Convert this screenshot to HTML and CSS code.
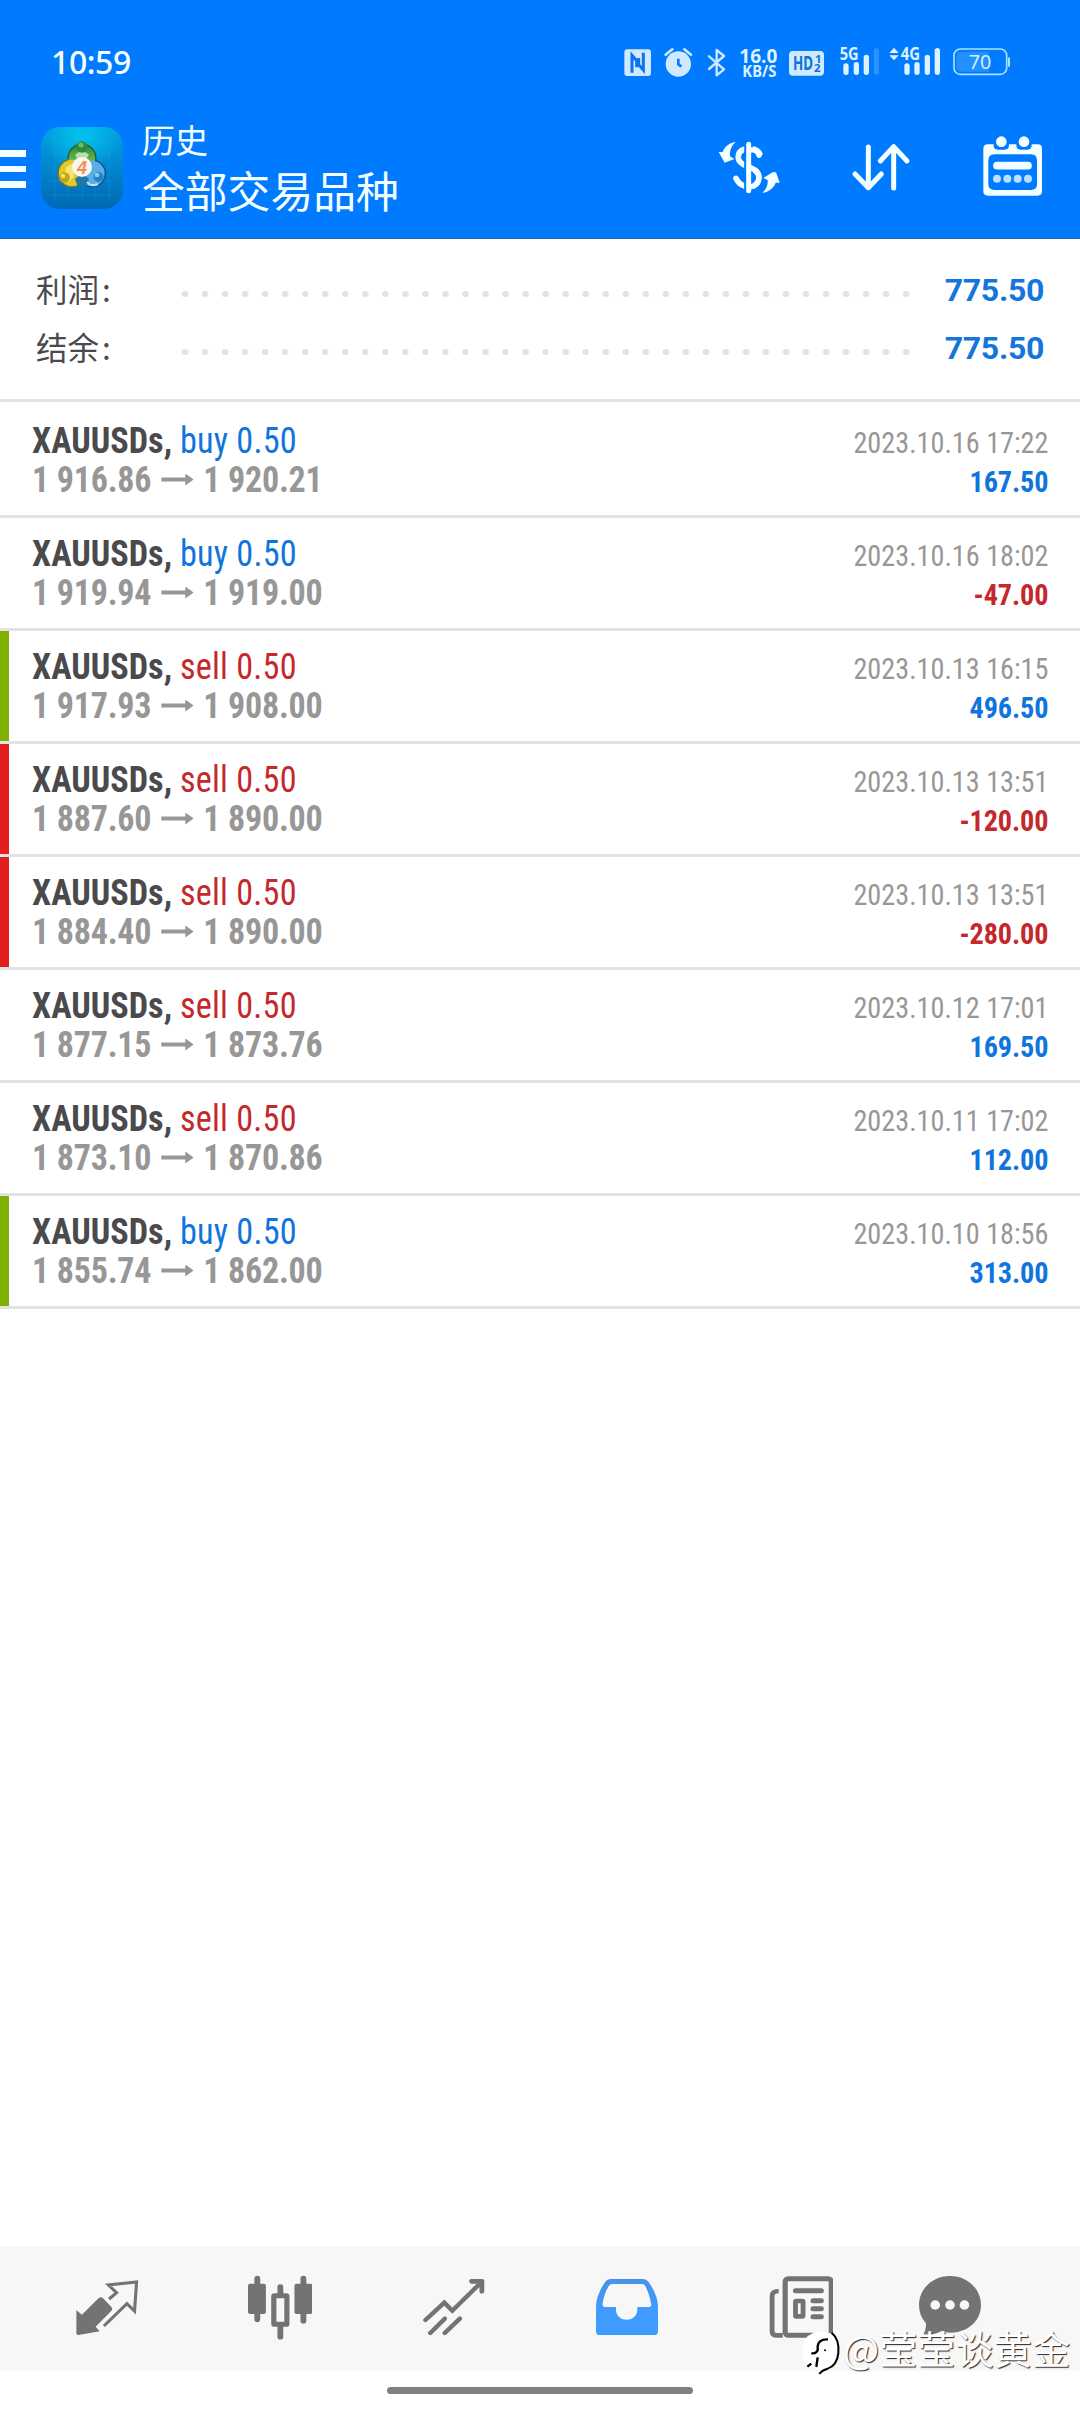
FILE: index.html
```html
<!DOCTYPE html>
<html lang="zh-CN">
<head>
<meta charset="utf-8">
<title>历史</title>
<link rel="stylesheet" href="styles.css">
</head>
<body>
<header class="header">
  <div class="status">
    <span class="clock">10:59</span>
    <div class="status-icons">
      <svg width="38" height="40" viewBox="60 36 114 120"><rect x="73" y="58" width="80" height="80" rx="9" fill="#cfeaff"/><path d="M96 128V76L110 92V112M130 68V120L116 104V84" fill="none" stroke="#0a74f5" stroke-width="9"/></svg>
      <svg width="41" height="40" viewBox="174 36 123 120"><circle cx="235" cy="102" r="38" fill="#cfeaff"/><path d="M197 74L217 58M273 74L253 58" stroke="#cfeaff" stroke-width="8" stroke-linecap="round"/><path d="M235 86V103L244 110" fill="none" stroke="#0a78fa" stroke-width="8"/></svg>
      <svg width="34" height="40" viewBox="297 36 102 120"><path d="M327 79L372 118L350 136V60L372 78L327 117" fill="none" stroke="#cfeaff" stroke-width="7" stroke-linejoin="round" stroke-linecap="round"/></svg>
      <svg class="status-text" width="50" height="40" viewBox="399 36 150 120"><text x="418" y="99" font-size="60" textLength="114" lengthAdjust="spacingAndGlyphs">16.0</text><text x="427" y="141" font-size="46" textLength="102" lengthAdjust="spacingAndGlyphs">KB/S</text></svg>
      <svg width="48" height="40" viewBox="549 36 144 120"><rect x="567" y="63" width="105" height="74" rx="12" fill="#cfeaff"/><g class="hd"><text x="579" y="121" font-size="57" textLength="60" lengthAdjust="spacingAndGlyphs">HD</text><text x="645" y="98" font-size="34">1</text><text x="642" y="126" font-size="34">2</text></g></svg>
      <svg class="status-text" width="54" height="40" viewBox="693 36 162 120"><text x="719" y="89" font-size="51" textLength="57" lengthAdjust="spacingAndGlyphs">5G</text><path d="M738 108V127M769 104V127M799 82V127" stroke="#dcf2ff" stroke-width="16" stroke-linecap="round"/><path d="M829 62V127" stroke="#2c92ff" stroke-width="15" stroke-linecap="round"/></svg>
      <svg class="status-text" width="62" height="40" viewBox="855 36 186 120"><path d="M868 69L882 53L896 69ZM868 76L882 91L896 76Z" fill="#dcf2ff"/><text x="902" y="89" font-size="51" textLength="58" lengthAdjust="spacingAndGlyphs">4G</text><path d="M921 108V127M951 104V127M982 82V127M1012 62V127" stroke="#dcf2ff" stroke-width="16" stroke-linecap="round"/></svg>
      <svg class="battery" width="68" height="40" viewBox="1041 36 204 120"><rect x="1062" y="57" width="158" height="76" rx="19" fill="none" stroke="#a9e4ff" stroke-width="5"/><path d="M1083 65H1166V125H1083Q1069 125 1069 111V79Q1069 65 1083 65Z" fill="#2490ff"/><path d="M1227 85V108" stroke="#a9e4ff" stroke-width="6" stroke-linecap="round"/><text x="1106" y="117" font-size="60" textLength="68" lengthAdjust="spacingAndGlyphs">70</text></svg>
    </div>
  </div>
  <div class="toolbar">
    <div class="menu"><i></i><i></i><i></i></div>
    <svg class="app-icon" width="82" height="82" viewBox="0 0 82 82">
      <defs>
        <linearGradient id="bg" x1="0" y1="0" x2="0" y2="1"><stop offset="0" stop-color="#00a4e4"/><stop offset=".5" stop-color="#0086cd"/><stop offset="1" stop-color="#0068b4"/></linearGradient>
        <radialGradient id="glow" cx=".5" cy=".12" r=".45"><stop offset="0" stop-color="#00c4ec"/><stop offset="1" stop-color="#00c4ec" stop-opacity="0"/></radialGradient>
        <linearGradient id="green" x1="0" y1="0" x2="0" y2="1"><stop offset="0" stop-color="#2c8c3c"/><stop offset="1" stop-color="#92cf5c"/></linearGradient>
      </defs>
      <rect width="82" height="82" rx="19" fill="url(#bg)"/>
      <rect width="82" height="82" rx="19" fill="url(#glow)"/>
      <path d="M14 8V74M27 8V74M41 8V74M54 8V74M68 8V74M8 14H74M8 27H74M8 41H74M8 54H74M8 68H74" stroke="#39b3e5" stroke-opacity=".22"/>
      <circle cx="41" cy="31" r="14.5" fill="#17603c"/>
      <circle cx="31" cy="46" r="14.500" fill="#78701b"/>
      <circle cx="51" cy="46.500" r="14" fill="#0b5088"/>
      <circle cx="41" cy="31" r="13.2" fill="url(#green)"/>
      <circle cx="31" cy="46" r="13.200" fill="#dfc92c"/>
      <circle cx="51" cy="46.500" r="12.700" fill="#59aee6"/>
      <path d="M34 28A9 9 0 0 1 48 28L41 38Z" fill="#b9dfa0"/>
      <path d="M24 44Q25 38 32 37L33 50Q29 54 26 56" fill="#f3e674"/>
      <path d="M34 52L41 46L48 52L45 60Q40 55 37 60Z" fill="#2277a8"/>
      <path d="M46 55Q50 60 57 57" fill="none" stroke="#bfe3f8" stroke-width="2"/>
      <circle cx="41" cy="20" r="5.7" fill="#2c8a43"/><circle cx="40" cy="18" r="2.5" fill="#72bb65"/>
      <circle cx="23.500" cy="50.500" r="5.300" fill="#c2a414"/><circle cx="22" cy="49" r="2.300" fill="#f2e26b"/>
      <circle cx="57.500" cy="50" r="5" fill="#2683c9"/><circle cx="56" cy="48" r="2.300" fill="#8bccf5"/>
      <circle cx="41" cy="40" r="10" fill="#f7f7f3"/>
      <text class="app-four" x="41" y="46.500" text-anchor="middle">4</text>
    </svg>
    <div class="titles">
      <div class="screen">历史</div>
      <div class="filter">全部交易品种</div>
    </div>
    <div class="actions">
      <svg width="62" height="62" viewBox="86 78 186 186"><path d="M211 131C202 115 180 111 162 119C143 127 141 151 160 162L195 181C214 191 213 217 194 227C173 237 149 225 140 205" fill="none" stroke="#f4ffff" stroke-width="17" stroke-linecap="round"/><path d="M178 88V256" stroke="#007aff" stroke-width="27"/><path d="M178 103V242" stroke="#f4ffff" stroke-width="15" stroke-linecap="round"/><path d="M184 173L199 181C212 191 213 217 194 227L185 230M184 120C197 118 205 122 209 136" fill="none" stroke="#f4ffff" stroke-width="16" stroke-linecap="round"/><path d="M139 96C122 98 107 108 100 126H88L106 158L135 147L122 139C121 120 126 108 139 96Z" fill="#f4ffff"/><path d="M219 249C236 246 252 236 259 218H271L260 187H250L222 204L235 210C236 227 230 238 219 249Z" fill="#f4ffff"/></svg>
      <svg width="62" height="62" viewBox="482 78 186 186"><path d="M537 111V233M497 192L537 233L576 192M613 234V110M573 153L613 110L653 153" fill="none" stroke="#f4ffff" stroke-width="15" stroke-linecap="round" stroke-linejoin="round"/></svg>
      <svg width="62" height="62" viewBox="875 79 186 186"><path fill-rule="evenodd" d="M893 104H1042Q1055 104 1055 117V245Q1055 258 1042 258H893Q879 258 879 245V117Q879 104 893 104ZM913 134Q894 134 894 153V224Q894 241 913 241H1022Q1040 241 1040 224V153Q1040 134 1022 134Z" fill="#f4ffff"/><path d="M910 96V107Q910 120 923 120H943Q956 120 956 107V96ZM978 96V107Q978 120 991 120H1011Q1024 120 1024 107V96Z" fill="#007aff"/><circle cx="933" cy="96" r="16" fill="#f4ffff"/><circle cx="1001" cy="96" r="16" fill="#f4ffff"/><path d="M920 168H1013" stroke="#f4ffff" stroke-width="23" stroke-linecap="round"/><g fill="#b9e2ff"><circle cx="920" cy="207" r="12"/><circle cx="951" cy="207" r="12"/><circle cx="982" cy="207" r="12"/><circle cx="1013" cy="207" r="12"/></g></svg>
    </div>
  </div>
</header>

<section class="summary">
  <div class="sum-row"><span>利润<b>:</b></span><i class="dots"></i><strong>775.50</strong></div>
  <div class="sum-row"><span>结余<b>:</b></span><i class="dots"></i><strong>775.50</strong></div>
</section>

<main class="deals">
  <article class="deal"><div class="left"><p class="name">XAUUSDs, <span class="buy">buy 0.50</span></p><p class="price">1 916.86<i class="arrow"></i>1 920.21</p></div><div class="right"><p class="date">2023.10.16 17:22</p><p class="profit buy">167.50</p></div></article>
  <article class="deal"><div class="left"><p class="name">XAUUSDs, <span class="buy">buy 0.50</span></p><p class="price">1 919.94<i class="arrow"></i>1 919.00</p></div><div class="right"><p class="date">2023.10.16 18:02</p><p class="profit sell">-47.00</p></div></article>
  <article class="deal tp"><div class="left"><p class="name">XAUUSDs, <span class="sell">sell 0.50</span></p><p class="price">1 917.93<i class="arrow"></i>1 908.00</p></div><div class="right"><p class="date">2023.10.13 16:15</p><p class="profit buy">496.50</p></div></article>
  <article class="deal sl"><div class="left"><p class="name">XAUUSDs, <span class="sell">sell 0.50</span></p><p class="price">1 887.60<i class="arrow"></i>1 890.00</p></div><div class="right"><p class="date">2023.10.13 13:51</p><p class="profit sell">-120.00</p></div></article>
  <article class="deal sl"><div class="left"><p class="name">XAUUSDs, <span class="sell">sell 0.50</span></p><p class="price">1 884.40<i class="arrow"></i>1 890.00</p></div><div class="right"><p class="date">2023.10.13 13:51</p><p class="profit sell">-280.00</p></div></article>
  <article class="deal"><div class="left"><p class="name">XAUUSDs, <span class="sell">sell 0.50</span></p><p class="price">1 877.15<i class="arrow"></i>1 873.76</p></div><div class="right"><p class="date">2023.10.12 17:01</p><p class="profit buy">169.50</p></div></article>
  <article class="deal"><div class="left"><p class="name">XAUUSDs, <span class="sell">sell 0.50</span></p><p class="price">1 873.10<i class="arrow"></i>1 870.86</p></div><div class="right"><p class="date">2023.10.11 17:02</p><p class="profit buy">112.00</p></div></article>
  <article class="deal tp"><div class="left"><p class="name">XAUUSDs, <span class="buy">buy 0.50</span></p><p class="price">1 855.74<i class="arrow"></i>1 862.00</p></div><div class="right"><p class="date">2023.10.10 18:56</p><p class="profit buy">313.00</p></div></article>
</main>

<nav class="tabs">
  <svg viewBox="220 135 186 198" preserveAspectRatio="none"><path d="M224 241L240 254L289 204Q295 199 301 204L326 231Q331 236 326 242L280 290L292 304L230 315Q224 316 224 309Z" fill="#737373"/><path d="M319 207L341 188L317 165L399 156L393 243L371 221L304 288" fill="none" stroke="#737373" stroke-width="9"/></svg>
  <svg viewBox="720 135 186 198" preserveAspectRatio="none"><path d="M747 146V268M881 146V272M814 171V195M814 285V320" stroke="#737373" stroke-width="17" stroke-linecap="round"/><rect x="720" y="161" width="52" height="91" rx="6" fill="#737373"/><rect x="855" y="161" width="52" height="91" rx="6" fill="#737373"/><rect x="795" y="197" width="38" height="86" rx="2" fill="#f7f7f7" stroke="#737373" stroke-width="15"/></svg>
  <svg viewBox="1223 135 186 198" preserveAspectRatio="none"><path d="M1233 270L1288 218L1311 242L1397 155M1247 309L1289 266M1289 309L1333 266" fill="none" stroke="#737373" stroke-width="13" stroke-linecap="round"/><path d="M1367 154H1397V184" fill="none" stroke="#737373" stroke-width="14" stroke-linecap="round" stroke-linejoin="round"/></svg>
  <svg viewBox="160 135 186 198" preserveAspectRatio="none"><defs><linearGradient id="tray" x1="0" y1="0" x2="0" y2="1"><stop offset="0" stop-color="#4a92e8"/><stop offset=".55" stop-color="#409bff"/></linearGradient></defs><path fill="url(#tray)" fill-rule="evenodd" d="M205 147H300Q310 147 315 155Q343 195 343 230V305Q343 315 332 315H174Q163 315 163 305V230Q163 195 190 155Q195 147 205 147ZM210 162Q204 162 200 168Q186 191 182 222Q181 231 189 231H221V240C223 279 281 279 283 240V231H317Q325 231 323 222Q318 191 306 168Q303 162 297 162Z"/></svg>
  <svg viewBox="664 135 186 198" preserveAspectRatio="none"><path d="M692 183Q673 184 673 198V304Q673 316 685 316H704" fill="none" stroke="#737373" stroke-width="14"/><rect x="711" y="146" width="134" height="170" rx="9" fill="#f7f7f7" stroke="#737373" stroke-width="15"/><path d="M741 182H816M792 212H816M792 236H816M792 260H816" stroke="#737373" stroke-width="15" stroke-linecap="round"/><rect x="741" y="213" width="22" height="46" rx="2" fill="#f7f7f7" stroke="#737373" stroke-width="14"/></svg>
  <svg viewBox="1095 135 186 198" preserveAspectRatio="none"><path d="M1188 138C1238 138 1278 176 1278 225C1278 273 1240 308 1188 308Q1176 308 1164 303Q1138 316 1110 316Q1120 296 1118 280Q1098 258 1098 225C1098 176 1138 138 1188 138Z" fill="#737373"/><g fill="#f7f7f7"><circle cx="1145" cy="225" r="14"/><circle cx="1188" cy="225" r="14"/><circle cx="1230" cy="225" r="14"/></g></svg>
</nav>
<div class="gesture"><i></i></div>
<div class="watermark">
  <svg width="42" height="48" viewBox="0 0 126 144"><path d="M38 8Q64 -2 88 10Q108 20 108 50Q108 92 93 108Q80 120 60 125L50 116Q12 112 5 72Q-2 24 38 8Z" fill="#fff"/><path d="M92 8Q116 28 112 70Q108 106 80 116Q62 121 55 132" fill="none" stroke="#000" stroke-width="6"/><path d="M81 28Q52 27 50 49V62M31 70Q49 72 51 56M50 82L46 111M31 101L19 110" fill="none" stroke="#000" stroke-width="7"/><circle cx="72" cy="61" r="3"/></svg>
  <span>@莹莹谈黄金</span>
</div>
</body>
</html>
```
FILE: styles.css
```css
* { box-sizing: border-box; }
body {
  margin: 0;
  width: 1080px;
  height: 2412px;
  display: flex;
  flex-direction: column;
  position: relative;
  overflow: hidden;
  background: #fff;
  font-family: Roboto, "Noto Sans CJK SC", sans-serif;
}
p { margin: 0; }
svg { display: block; flex: none; }

.header {
  height: 239px;
  background: #007aff;
  border-bottom: 1px solid #1767b4;
  color: #f4ffff;
}
.status {
  height: 124px;
  padding: 42px 65px 0 51px;
  display: flex;
  justify-content: space-between;
}
.clock {
  font: 500 32px/39px "Noto Sans", sans-serif;
  letter-spacing: -0.4px;
}
.status-icons { display: flex; }
.status-text text { font-family: "Noto Sans", sans-serif; font-weight: 700; fill: #dcf2ff; }
.hd text { font-family: "Noto Sans", sans-serif; font-weight: 700; fill: #0a74d8; }
.battery text { font-family: "Noto Sans", sans-serif; fill: #cdeeff; }

.toolbar { display: flex; align-items: flex-start; padding-right: 36px; }
.menu { width: 26px; padding-top: 26px; display: grid; gap: 9px; }
.menu i { height: 6.5px; background: #f4ffff; }
.app-icon { margin: 3px 0 0 15px; }
.app-four { font: italic 700 18px "Liberation Sans", sans-serif; fill: #f0924a; }
.titles { margin: -2px 0 0 19px; font-family: "Noto Sans CJK SC", sans-serif; }
.screen { font-size: 33px; line-height: 34px; }
.filter { font-size: 42.8px; line-height: 50px; margin-top: 8px; }
.actions { margin: 12px 0 0 auto; display: flex; gap: 70px; }

.summary {
  height: 163px;
  padding: 20px 36px 0;
  border-bottom: 3px solid #e3e3e3;
  font-size: 32px;
  color: #4a4a4d;
}
.sum-row { display: flex; height: 58px; align-items: center; line-height: 58px; }
.sum-row span { width: 139px; font-family: "Noto Sans CJK SC", sans-serif; font-size: 31.5px; }
.sum-row b { font-weight: 400; margin-left: 3px; }
.dots {
  width: 742px;
  height: 20px;
  margin-top: 11px;
  background: radial-gradient(circle, #e2e2e2 2.8px, transparent 3.6px) 0 0 / 20.04px 20px;
}
.sum-row strong { margin: 3px 0 0 auto; font-weight: 700; letter-spacing: -0.3px; color: #1476dc; }

.deals { flex: 1; padding-top: 3px; font-stretch: 75%; }
.deal {
  height: 113px;
  padding: 21px 32px 0;
  display: flex;
  justify-content: space-between;
  border-bottom: 3px solid #e3e3e3;
  background: no-repeat 0 0 / 9px 110px;
}
.tp { background-image: linear-gradient(#80b000, #80b000); }
.sl { background-image: linear-gradient(#e21e1e, #e21e1e); }
.left { transform-origin: 0 0; transform: scaleX(0.937); }
.name { font-size: 36.5px; line-height: 39px; margin-top: -5px; font-weight: 700; color: #4a4a4d; }
.name span { font-weight: 400; letter-spacing: 0.25px; }
.price { display: flex; align-items: center; font-size: 36.3px; line-height: 39px; font-weight: 700; letter-spacing: -0.2px; color: #979797; }
.arrow { width: 35px; height: 12px; margin: 0 10.2px; background: #979797; clip-path: polygon(0 4px, 26px 4px, 26px 0, 35px 6px, 26px 12px, 26px 8px, 0 8px); }
.right { text-align: right; transform-origin: 100% 0; transform: scaleX(0.94); }
.date { font-size: 30px; line-height: 38px; margin-top: -2px; color: #979797; }
.profit { font-size: 30px; line-height: 38px; margin-top: 1px; font-weight: 700; letter-spacing: -0.1px; }
.buy { color: #0f75dc; }
.sell { color: #c5282c; }

.tabs {
  height: 125px;
  background: #f7f7f7;
  padding: 29px 0 0 20px;
  display: grid;
  grid-template-columns: repeat(5, 173.5px) 124px;
  justify-items: center;
  align-items: start;
}
.tabs svg { width: 64px; height: 66px; }
.gesture { height: 41px; padding-top: 16px; display: flex; justify-content: center; align-items: flex-start; }
.gesture i { width: 306px; height: 7px; border-radius: 4px; background: #808080; }

.watermark { position: absolute; left: 801px; top: 2330px; display: flex; }
.watermark span {
  font: 38.2px/38px "Noto Sans CJK SC", sans-serif;
  margin: -1px 0 0 0;
  color: #fff;
  text-shadow: 1px 1px 1px rgba(0, 0, 0, 0.85);
  white-space: nowrap;
}
```
